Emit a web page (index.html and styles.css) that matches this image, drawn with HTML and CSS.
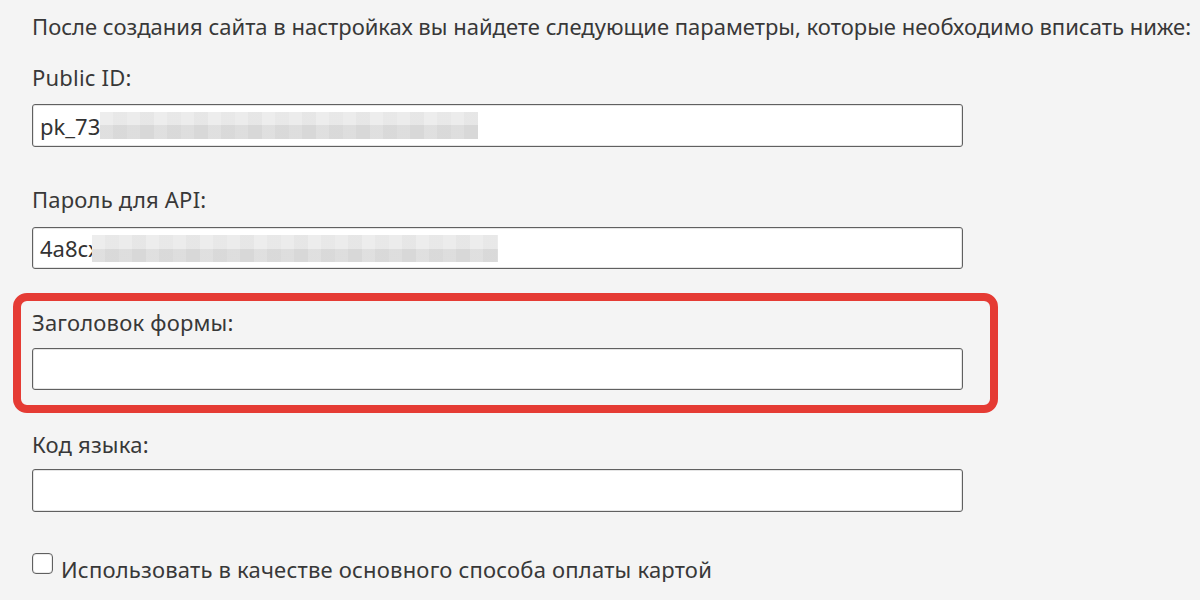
FILE: index.html
```html
<!DOCTYPE html>
<html lang="ru">
<head>
<meta charset="utf-8">
<title>Настройки</title>
<link rel="stylesheet" href="styles.css">
</head>
<body>
<div class="page">
  <p class="intro">После создания сайта в настройках вы найдете следующие параметры, которые необходимо вписать ниже:</p>

  <div class="field field-first">
    <label class="label">Public ID:</label>
    <div class="input"><span class="value">pk_73</span><span class="mosaic mosaic-1"></span></div>
  </div>

  <div class="field field-second">
    <label class="label">Пароль для API:</label>
    <div class="input"><span class="value">4a8cx</span><span class="mosaic mosaic-2"></span></div>
  </div>

  <div class="highlight">
    <div class="field field-inner">
      <label class="label">Заголовок формы:</label>
      <div class="input input-short"></div>
    </div>
  </div>

  <div class="field field-after">
    <label class="label">Код языка:</label>
    <div class="input input-tight"></div>
  </div>

  <div class="check-row">
    <span class="checkbox"></span>
    <span class="check-text">Использовать в качестве основного способа оплаты картой</span>
  </div>
</div>
</body>
</html>
```

FILE: styles.css
```css
html, body {
  margin: 0;
  padding: 0;
  background: #f4f4f4;
}

body {
  font-family: "Noto Sans", "Liberation Sans", sans-serif;
  color: #383838;
  font-size: 22px;
}

.page {
  padding: 13px 0 0 32px;
  width: 1168px;
}

.intro {
  margin: 0;
  line-height: 26px;
  white-space: nowrap;
}

.field-first {
  margin-top: 25px;
}

.field-second {
  margin-top: 39px;
}

.label {
  display: block;
  line-height: 26px;
  height: 26px;
  letter-spacing: 0.2px;
}

.input {
  margin-top: 14px;
  box-sizing: border-box;
  width: 931px;
  height: 43px;
  background: #fff;
  border: 1px solid #606060;
  box-shadow: inset 0 0 0 1px rgba(0,0,0,0.10);
  border-radius: 3px;
  display: flex;
  align-items: center;
  padding-left: 7px;
  overflow: hidden;
}

.field-second .input {
  margin-top: 15px;
  height: 42px;
}

.input-short {
  margin-top: 13px;
  height: 42px;
}

.input-tight {
  margin-top: 12px;
}

.value {
  font-size: 22px;
  line-height: 26px;
  color: #333;
  white-space: nowrap;
}

.mosaic {
  display: inline-block;
  height: 27px;
  position: relative;
  background:
    repeating-linear-gradient(90deg, rgba(255,255,255,0.10) 0 13px, rgba(0,0,0,0.012) 13px 27px, rgba(255,255,255,0.05) 27px 40px, rgba(0,0,0,0.02) 40px 54px),
    linear-gradient(to bottom, #ebebeb 0 50%, #dcdcdc 50% 100%);
}

.mosaic-1 {
  width: 378px;
}

.mosaic-2 {
  width: 406px;
  margin-left: -8px;
}

.highlight {
  margin: 24px 0 0 -19px;
  width: 985px;
  box-sizing: border-box;
  border: 8px solid #e53b34;
  border-radius: 14px;
  padding: 8px 0 15px 11px;
}

.field-after {
  margin-top: 18px;
}

.check-row {
  display: flex;
  align-items: flex-start;
  gap: 8px;
  margin-top: 41px;
}

.checkbox {
  width: 21px;
  height: 21px;
  box-sizing: border-box;
  border: 1px solid #606060;
  box-shadow: inset 0 0 0 1px rgba(0,0,0,0.08);
  border-radius: 4px;
  background: #fff;
  flex: none;
}

.check-text {
  margin-top: 3px;
  line-height: 26px;
  letter-spacing: 0.2px;
}
```
